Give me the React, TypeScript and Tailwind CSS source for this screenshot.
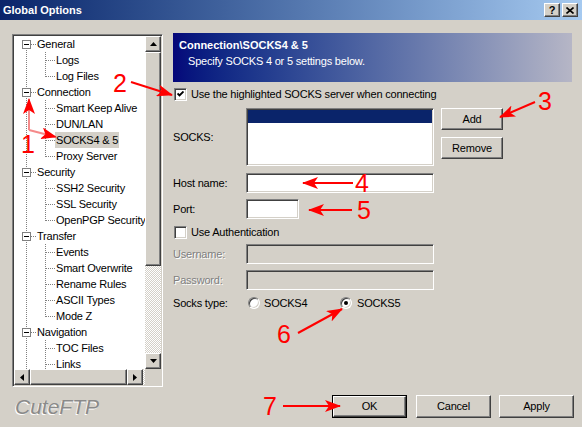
import React from 'react';

const raised =
  'border border-t-white border-l-white border-r-[#404040] border-b-[#404040] shadow-[inset_-1px_-1px_0_#808080] bg-[#d4d0c8]';
const sunken =
  'border border-t-[#808080] border-l-[#808080] border-b-white border-r-white shadow-[inset_1px_1px_0_#404040,inset_-1px_-1px_0_#d4d0c8]';
const vdot = 'bg-[repeating-linear-gradient(to_bottom,#808080_0_1px,transparent_1px_2px)]';
const hdot = 'bg-[repeating-linear-gradient(to_right,#808080_0_1px,transparent_1px_2px)]';
const dither = 'bg-[repeating-conic-gradient(#ffffff_0_25%,#d4d0c8_0_50%)] bg-size-[2px_2px]';

const tree = [
  { label: 'General', children: ['Logs', 'Log Files'] },
  { label: 'Connection', children: ['Smart Keep Alive', 'DUN/LAN', 'SOCKS4 & 5', 'Proxy Server'] },
  { label: 'Security', children: ['SSH2 Security', 'SSL Security', 'OpenPGP Security'] },
  { label: 'Transfer', children: ['Events', 'Smart Overwrite', 'Rename Rules', 'ASCII Types', 'Mode Z'] },
  { label: 'Navigation', children: ['TOC Files', 'Links'], more: true },
];

function ParentRow({ label, first }: { label: string; first?: boolean }) {
  return (
    <div className="flex h-4">
      <div className="relative w-[22px] shrink-0">
        <span className={`absolute left-[12px] w-px bottom-0 ${first ? 'top-[8px]' : 'top-0'} ${vdot}`} />
        <span className={`absolute left-[17px] top-[8px] h-px w-[5px] ${hdot}`} />
        <span className="absolute left-[8px] top-[4px] h-[9px] w-[9px] border border-[#808080] bg-white">
          <span className="absolute left-[1px] top-[3px] h-px w-[5px] bg-black" />
        </span>
      </div>
      <span className="px-[1px] leading-4 whitespace-nowrap">{label}</span>
    </div>
  );
}

function ChildRow({ label, last, selected }: { label: string; last?: boolean; selected?: boolean }) {
  return (
    <div className="flex h-4">
      <div className="relative w-[41px] shrink-0">
        <span className={`absolute left-[12px] top-0 bottom-0 w-px ${vdot}`} />
        <span className={`absolute left-[31px] top-0 w-px ${last ? 'h-[9px]' : 'bottom-0'} ${vdot}`} />
        <span className={`absolute left-[32px] top-[8px] h-px w-[9px] ${hdot}`} />
      </div>
      <span className={`px-[1px] leading-4 whitespace-nowrap ${selected ? 'bg-[#d4d0c8]' : ''}`}>{label}</span>
    </div>
  );
}

function Tri({ dir }: { dir: 'up' | 'down' | 'left' | 'right' }) {
  const pts = {
    up: '3.5,0 7,4 0,4',
    down: '0,0 7,0 3.5,4',
    left: '4,0 4,7 0,3.5',
    right: '0,0 4,3.5 0,7',
  }[dir];
  const vertical = dir === 'up' || dir === 'down';
  return (
    <svg width={vertical ? 7 : 4} height={vertical ? 4 : 7} viewBox={vertical ? '0 0 7 4' : '0 0 4 7'}>
      <polygon points={pts} fill="#000" />
    </svg>
  );
}

function ScrollBtn({ dir }: { dir: 'up' | 'down' | 'left' | 'right' }) {
  return (
    <div className={`flex h-4 w-4 shrink-0 items-center justify-center ${raised}`}>
      <Tri dir={dir} />
    </div>
  );
}

function Tree() {
  return (
    <div className={`flex h-[353px] w-[151px] flex-col bg-white ${sunken} p-px`}>
      <div className="flex h-[333px]">
        <div className="w-[131px] overflow-hidden">
          {tree.map((g, gi) => (
            <div key={g.label}>
              <ParentRow label={g.label} first={gi === 0} />
              {g.children.map((c, ci) => (
                <ChildRow
                  key={c}
                  label={c}
                  last={!g.more && ci === g.children.length - 1}
                  selected={c === 'SOCKS4 & 5'}
                />
              ))}
            </div>
          ))}
        </div>
        <div className="flex w-4 flex-col">
          <ScrollBtn dir="up" />
          <div className={`h-[214px] ${raised}`} />
          <div className={`flex-1 ${dither}`} />
          <ScrollBtn dir="down" />
        </div>
      </div>
      <div className="flex h-4">
        <ScrollBtn dir="left" />
        <div className={`w-[97px] ${raised}`} />
        <ScrollBtn dir="right" />
        <div className={`flex-1 ${dither}`} />
        <div className="w-4 bg-[#d4d0c8]" />
      </div>
    </div>
  );
}

function Checkbox({ checked }: { checked?: boolean }) {
  return (
    <div className={`flex h-[13px] w-[13px] shrink-0 items-center justify-center bg-white ${sunken}`}>
      {checked && (
        <svg width="7" height="7" viewBox="0 0 7 7">
          <path d="M0.5 2.5 L2.5 4.5 L6.5 0.5" stroke="#000" strokeWidth="1.9" fill="none" />
        </svg>
      )}
    </div>
  );
}

function Radio({ checked }: { checked?: boolean }) {
  return (
    <div className="flex h-[12px] w-[12px] shrink-0 items-center justify-center rounded-full border border-[#808080] border-b-white border-r-white bg-white shadow-[inset_1px_1px_0_#404040,inset_-1px_-1px_0_#d4d0c8]">
      {checked && <div className="h-[4px] w-[4px] rounded-full bg-black" />}
    </div>
  );
}

function Field({ w, disabled }: { w: string; disabled?: boolean }) {
  return <div className={`h-[20px] ${w} ${disabled ? 'bg-[#d4d0c8]' : 'bg-white'} ${sunken}`} />;
}

function Annotations() {
  const red = '#ff0000';
  return (
    <>
      <svg className="pointer-events-none absolute left-0 top-0" width="582" height="427">
        <defs>
          <marker id="ah" markerUnits="userSpaceOnUse" markerWidth="16" markerHeight="12" refX="15" refY="6" orient="auto">
            <path d="M0,0 L16,6 L0,12 L4,6 Z" fill={red} />
          </marker>
        </defs>
        <g fill="none" strokeWidth="2">
          <path d="M29,130 L29,99" stroke="#f58a8a" markerEnd="url(#ah)" />
          <path d="M29,130 L56,137" stroke="#f58a8a" markerEnd="url(#ah)" />
          <path d="M131,82 L172,95" stroke={red} markerEnd="url(#ah)" />
          <path d="M535,102 L500,117" stroke={red} markerEnd="url(#ah)" />
          <path d="M353,183 L303,183" stroke={red} markerEnd="url(#ah)" />
          <path d="M352,210 L309,210" stroke={red} markerEnd="url(#ah)" />
          <path d="M298,333 L342,309" stroke={red} markerEnd="url(#ah)" />
          <path d="M283,406 L340,406" stroke={red} markerEnd="url(#ah)" />
        </g>
      </svg>
      <span className="absolute left-[28px] top-[144px] -translate-x-1/2 -translate-y-1/2 text-[25px] leading-none tracking-normal text-[#ff0000]">1</span>
      <span className="absolute left-[120px] top-[83px] -translate-x-1/2 -translate-y-1/2 text-[25px] leading-none tracking-normal text-[#ff0000]">2</span>
      <span className="absolute left-[545px] top-[101px] -translate-x-1/2 -translate-y-1/2 text-[25px] leading-none tracking-normal text-[#ff0000]">3</span>
      <span className="absolute left-[362px] top-[183px] -translate-x-1/2 -translate-y-1/2 text-[25px] leading-none tracking-normal text-[#ff0000]">4</span>
      <span className="absolute left-[364px] top-[210px] -translate-x-1/2 -translate-y-1/2 text-[25px] leading-none tracking-normal text-[#ff0000]">5</span>
      <span className="absolute left-[284px] top-[334px] -translate-x-1/2 -translate-y-1/2 text-[25px] leading-none tracking-normal text-[#ff0000]">6</span>
      <span className="absolute left-[270px] top-[406px] -translate-x-1/2 -translate-y-1/2 text-[25px] leading-none tracking-normal text-[#ff0000]">7</span>
    </>
  );
}

export default function App() {
  return (
    <div className="relative h-[427px] w-[582px] overflow-hidden bg-[#d4d0c8] font-['Liberation_Sans',Arial,sans-serif] text-[11px] tracking-[-0.2px] text-black">
      {/* Title bar */}
      <div className="flex h-[20px] items-center bg-linear-to-r from-[#0a246a] to-[#a6caf0] pl-[3px] pr-[4px]">
        <span className="font-bold tracking-normal text-white">Global Options</span>
        <div className="ml-auto flex gap-[2px]">
          <div className={`flex h-[14px] w-[16px] items-center justify-center text-[11px] font-bold leading-none ${raised}`}>?</div>
          <div className={`flex h-[14px] w-[16px] items-center justify-center ${raised}`}>
            <svg width="8" height="7" viewBox="0 0 8 7">
              <path d="M0.5 0.5 L7.5 6.5 M7.5 0.5 L0.5 6.5" stroke="#000" strokeWidth="1.6" />
            </svg>
          </div>
        </div>
      </div>

      {/* Body */}
      <div className="flex h-[375px]">
        <div className="ml-[12px] mt-[14px]">
          <Tree />
        </div>

        <div className="ml-[10px] mt-[13px] flex flex-col">
          <div className="h-[49px] w-[399px] bg-linear-to-r from-[#06067a] to-[#b6b6c6] pl-[6px] pt-[4px] leading-[16px] text-white">
            <div className="font-bold tracking-normal">{'Connection\\SOCKS4 & 5'}</div>
            <div className="pl-[9px]">Specify SOCKS 4 or 5 settings below.</div>
          </div>

          <div className="ml-px mt-[6px] flex h-[13px] items-center gap-[4px]">
            <Checkbox checked />
            <span>Use the highlighted SOCKS server when connecting</span>
          </div>

          <div className="mt-[7px] flex">
            <div className="flex w-[73px] items-center">SOCKS:</div>
            <div className={`h-[58px] w-[188px] bg-white p-px ${sunken}`}>
              <div className="h-[13px] bg-[#0a246a]" />
            </div>
            <div className="ml-[7px] flex flex-col gap-[7px]">
              <div className={`flex h-[22px] w-[62px] items-center justify-center ${raised}`}>Add</div>
              <div className={`flex h-[22px] w-[62px] items-center justify-center ${raised}`}>Remove</div>
            </div>
          </div>

          <div className="mt-[7px] flex items-center">
            <span className="w-[73px]">Host name:</span>
            <Field w="w-[188px]" />
          </div>

          <div className="mt-[6px] flex items-center">
            <span className="w-[73px]">Port:</span>
            <Field w="w-[53px]" />
          </div>

          <div className="ml-px mt-[7px] flex h-[13px] items-center gap-[4px]">
            <Checkbox />
            <span>Use Authentication</span>
          </div>

          <div className="mt-[5px] flex items-center">
            <span className="w-[73px] text-[#808080] [text-shadow:1px_1px_0_#fff]">Username:</span>
            <Field w="w-[188px]" disabled />
          </div>

          <div className="mt-[6px] flex items-center">
            <span className="w-[73px] text-[#808080] [text-shadow:1px_1px_0_#fff]">Password:</span>
            <Field w="w-[188px]" disabled />
          </div>

          <div className="mt-[7px] flex h-[12px] items-center">
            <span className="w-[75px]">Socks type:</span>
            <div className="flex w-[92px] items-center gap-[4px]">
              <Radio />
              <span>SOCKS4</span>
            </div>
            <div className="flex items-center gap-[5px]">
              <Radio checked />
              <span>SOCKS5</span>
            </div>
          </div>
        </div>
      </div>

      {/* Footer */}
      <div className="flex h-[23px] items-center">
        <span className="ml-[15px] text-[21px] italic leading-none tracking-normal text-[#8a8a8a] [text-shadow:-1px_1px_0_#ffffff]">
          CuteFTP
        </span>
        <div className="ml-auto mr-[8px] flex">
          <div className="h-[23px] w-[75px] border border-black">
            <div className={`flex h-full items-center justify-center ${raised}`}>OK</div>
          </div>
          <div className={`ml-[9px] flex h-[23px] w-[75px] items-center justify-center ${raised}`}>Cancel</div>
          <div className={`ml-[8px] flex h-[23px] w-[75px] items-center justify-center ${raised}`}>Apply</div>
        </div>
      </div>

      <Annotations />
    </div>
  );
}
